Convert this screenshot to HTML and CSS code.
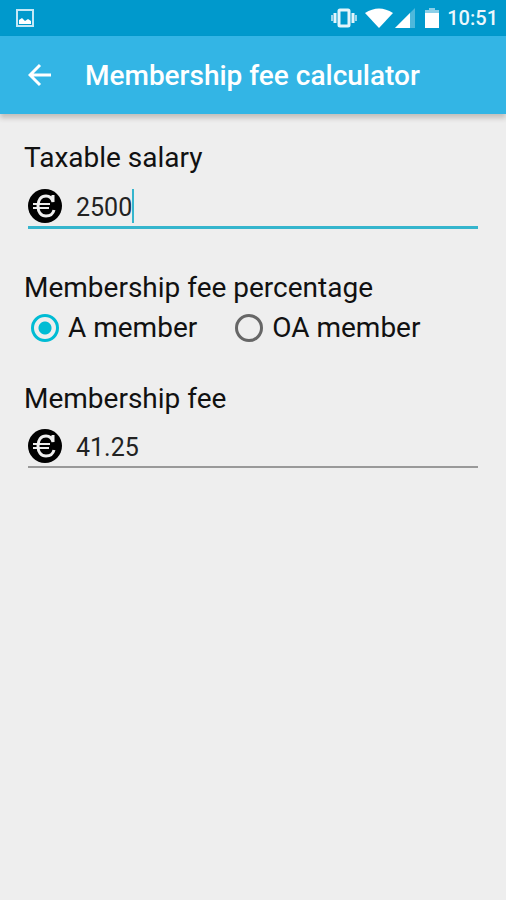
FILE: index.html
```
<!DOCTYPE html>
<html lang="en">
  <head>
    <meta charset="UTF-8" />
    <meta name="viewport" content="width=device-width, initial-scale=1.0" />
    <title>Membership fee calculator</title>
    <link rel="stylesheet" href="styles.css">
  </head>
  <body>
    <div class="status-bar">
      <svg class="picture-icon" width="18" height="18" viewBox="0 0 18 18">
        <rect x="1" y="1" width="16" height="16" fill="none" stroke="#c4e8f6" stroke-width="2" />
        <path d="M3 15v-4l3-2 3 3 3-2 3 2v3z" fill="#fff" />
      </svg>
      <div class="status-icons">
        <svg width="26" height="20" viewBox="0 0 26 20">
          <rect x="8" y="2" width="10" height="16" rx="1" fill="none" stroke="#e4f5fb" stroke-width="3" />
          <path d="M4 5v10M22 5v10" stroke="#e4f5fb" stroke-width="3" />
          <path d="M1 7v6M25 7v6" stroke="#9dd6ec" stroke-width="2" />
        </svg>
        <svg class="wifi-icon" width="28" height="20" viewBox="0 0 28 20">
          <path d="M0 5Q14-4 28 5L14 20z" fill="#fff" />
        </svg>
        <svg class="signal-icon" width="20" height="20" viewBox="0 0 20 20">
          <path d="M0 20L20 0v20z" fill="#4db8db" />
          <path d="M0 20L15 5v15z" fill="#fff" />
        </svg>
        <svg class="battery-icon" width="14" height="20" viewBox="0 0 14 20">
          <path d="M0 2h4V0h6v2h4v4H0z" fill="#8ccfe8" />
          <path d="M0 5h14v15H0z" fill="#fff" />
        </svg>
        <span class="clock">10:51</span>
      </div>
    </div>

    <header class="app-bar">
      <button class="back-button" type="button" aria-label="Back">
        <svg width="24" height="24" viewBox="0 0 24 24">
          <path d="M23 12H2M12 2L2 12l10 10" fill="none" stroke="#fff" stroke-width="3" />
        </svg>
      </button>
      <h1 class="title">Membership fee calculator</h1>
    </header>

    <main>
      <form class="calculator">
        <div class="group">
          <label class="label" for="salary">Taxable salary</label>
          <div class="field active">
            <svg class="euro-icon" width="34" height="34" viewBox="0 0 34 34">
              <circle cx="17" cy="17" r="17" fill="#000" />
              <path d="M25 6v7c-1-4-3-6-7-6-5 0-8 4-8 10s3 10 8 10c4 0 7-2 8-6" fill="none" stroke="#eee" stroke-width="3" />
              <path d="M5 15h17M5 19h16" stroke="#eee" stroke-width="2" />
            </svg>
            <input class="amount salary" id="salary" type="text" inputmode="decimal" value="2500" />
            <span class="caret"></span>
          </div>
        </div>

        <fieldset class="group">
          <legend class="label">Membership fee percentage</legend>
          <div class="options">
            <label class="option" for="a-member">
              <input type="radio" id="a-member" name="member" value="a" checked />
              A member
            </label>
            <label class="option" for="oa-member">
              <input type="radio" id="oa-member" name="member" value="oa" />
              OA member
            </label>
          </div>
        </fieldset>

        <div class="group">
          <label class="label" for="fee">Membership fee</label>
          <div class="field">
            <svg class="euro-icon" width="34" height="34" viewBox="0 0 34 34">
              <circle cx="17" cy="17" r="17" fill="#000" />
              <path d="M25 6v7c-1-4-3-6-7-6-5 0-8 4-8 10s3 10 8 10c4 0 7-2 8-6" fill="none" stroke="#eee" stroke-width="3" />
              <path d="M5 15h17M5 19h16" stroke="#eee" stroke-width="2" />
            </svg>
            <input class="amount" id="fee" type="text" value="41.25" readonly />
          </div>
        </div>
      </form>
    </main>
  </body>
</html>
```
FILE: styles.css
```
* {
  margin: 0;
  padding: 0;
  box-sizing: border-box;
}

:root {
  --status-bg: #0099cc;
  --bar-bg: #33b5e5;
  --page-bg: #eeeeee;
  --accent: #00bcd4;
  --line-active: #35b5cd;
  --line: #999999;
  --text: #111111;
}

body {
  min-height: 100vh;
  background-color: var(--page-bg);
  color: var(--text);
  font-family: Roboto, "Liberation Sans", sans-serif;
}

.status-bar {
  display: flex;
  align-items: center;
  justify-content: space-between;
  height: 36px;
  padding: 0 8px 0 16px;
  background-color: var(--status-bg);
}

.status-icons {
  display: flex;
  align-items: center;
}

.wifi-icon {
  margin-left: 8px;
}

.signal-icon {
  margin-left: 2px;
}

.battery-icon {
  margin: 0 8px 0 10px;
}

.clock {
  color: #eaf7fc;
  font-size: 20px;
  font-weight: 500;
}

.app-bar {
  display: flex;
  align-items: center;
  gap: 33px;
  height: 78px;
  padding: 0 28px;
  background-color: var(--bar-bg);
  box-shadow: 0 4px 5px rgba(60, 40, 30, 0.24);
}

.back-button {
  display: flex;
  border: none;
  background: none;
  cursor: pointer;
}

.title {
  color: #fff;
  font-size: 28px;
  font-weight: 500;
}

.calculator {
  display: flex;
  flex-direction: column;
  gap: 33px;
  padding: 26px 24px;
}

.group {
  border: none;
}

.label {
  display: block;
  font-size: 28px;
  line-height: 36px;
}

.field {
  display: flex;
  align-items: center;
  margin: 0 4px 8px;
  padding: 12px 0 3px;
  border-bottom: 2px solid var(--line);
}

.field.active {
  padding-top: 13px;
  border-bottom: 3px solid var(--line-active);
}

.amount {
  flex: 1;
  min-width: 0;
  margin-left: 14px;
  padding-top: 3px;
  border: none;
  outline: none;
  background: none;
  color: #222;
  font-family: inherit;
  font-size: 25px;
}

/* sized to its digits so the caret sits right after them */
.salary {
  flex: none;
  width: 4ch;
}

.caret {
  width: 2px;
  height: 34px;
  background-color: var(--line-active);
}

.options {
  display: flex;
  gap: 38px;
  padding: 5px 7px 3px;
}

.option {
  display: flex;
  align-items: center;
  gap: 9px;
  font-size: 28px;
  line-height: 34px;
}

.option input {
  appearance: none;
  width: 28px;
  height: 28px;
  border: 3px solid #666;
  border-radius: 50%;
}

.option input:checked {
  border-color: var(--accent);
  background: radial-gradient(circle, var(--accent) 6px, transparent 7px);
}
```
